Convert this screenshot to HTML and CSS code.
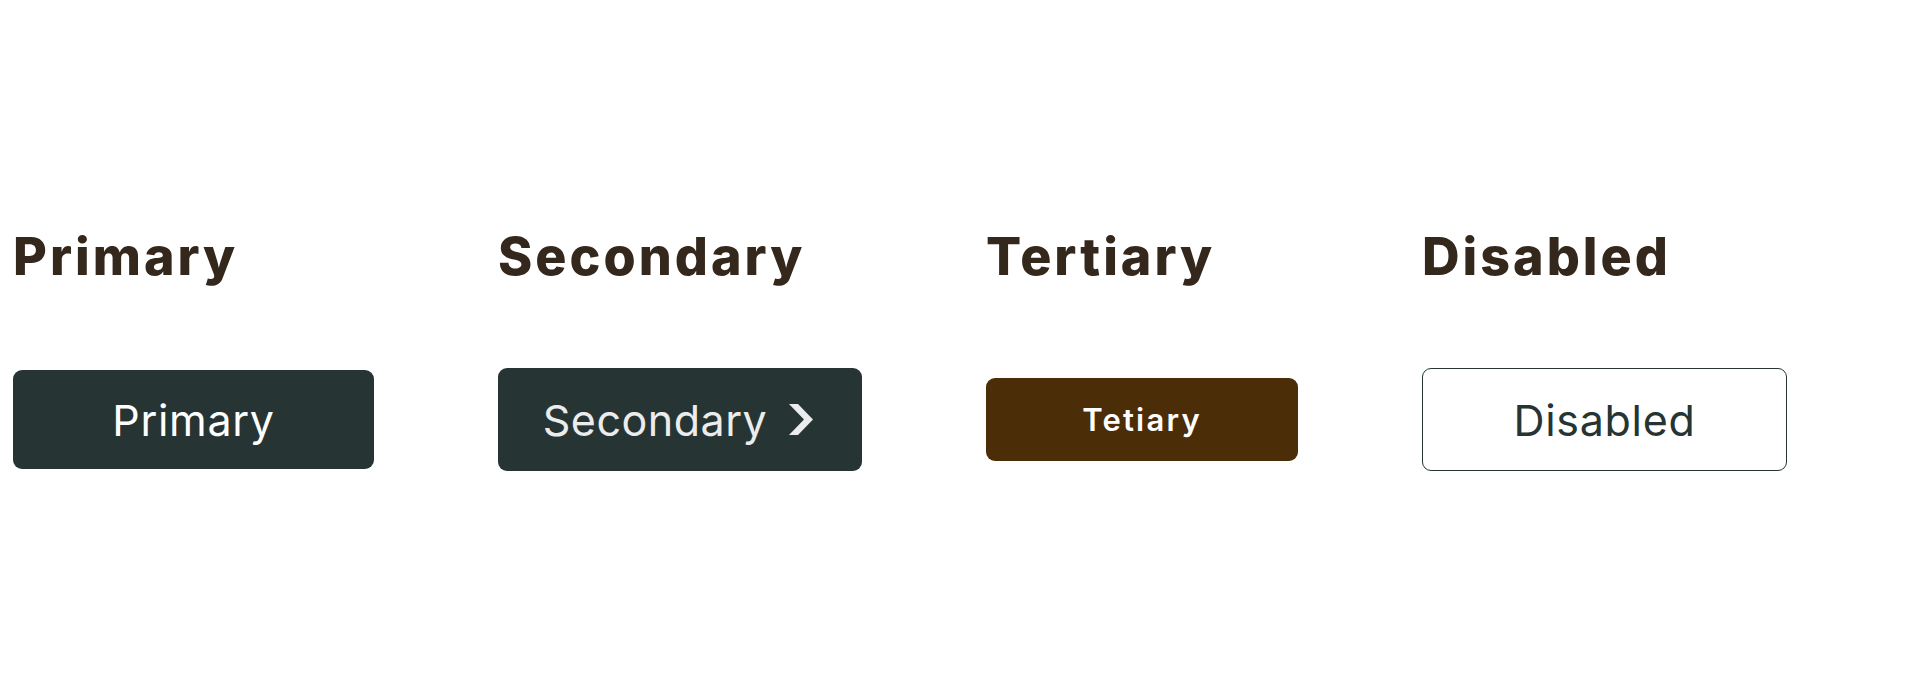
FILE: index.html
```html
<!DOCTYPE html>
<html lang="en">
<head>
    <meta charset="UTF-8">
    <meta name="viewport" content="width=device-width, initial-scale=1.0">
    <title>Buttons</title>
    <link rel="stylesheet" href="styles.css">
</head>
<body>
    <div class="button-grid">
        <h2 class="title">Primary</h2>
        <h2 class="title">Secondary</h2>
        <h2 class="title">Tertiary</h2>
        <h2 class="title">Disabled</h2>

        <button class="btn btn-primary">Primary</button>
        <button class="btn btn-secondary">
            Secondary
            <svg class="chevron" width="24" height="31" viewBox="0 0 24 31">
                <polygon points="0,0 9,0 24,15.5 9,31 0,31 15,15.5" fill="currentColor"/>
            </svg>
        </button>
        <button class="btn btn-tertiary">Tetiary</button>
        <button class="btn btn-disabled" disabled>Disabled</button>
    </div>
</body>
</html>
```

FILE: styles.css
```css
body {
    margin: 0;
    padding: 231px 13px 0;
    font-family: Inter, "Noto Sans", sans-serif;
    background: #fff;
}
.button-grid {
    display: grid;
    grid-template-columns: 361px 364px 312px 365px;
    column-gap: 124px;
    row-gap: 85px;
    align-items: center;
}
.title {
    margin: 0;
    font-size: 52px;
    line-height: 1;
    font-weight: 800;
    letter-spacing: 3px;
    color: #34271c;
}
.btn {
    display: flex;
    align-items: center;
    justify-content: center;
    border: none;
    border-radius: 9px;
    font-family: Inter, "Noto Sans", sans-serif;
    font-size: 43px;
    font-weight: 400;
    letter-spacing: 0.7px;
    color: #fff;
    padding: 0;
    cursor: pointer;
}
.btn-primary {
    height: 99px;
    background-color: #263533;
}
.btn-secondary {
    height: 103px;
    background-color: #263533;
    color: #ececec;
    gap: 22px;
    letter-spacing: 0.5px;
    padding-right: 4px;
}
.btn-tertiary {
    height: 83px;
    background-color: #4b2d07;
    font-size: 31px;
    font-weight: 600;
    letter-spacing: 2.2px;
}
.btn-disabled {
    height: 103px;
    background-color: #fff;
    border: 1.5px solid #263533;
    color: #263533;
    cursor: default;
}
```
